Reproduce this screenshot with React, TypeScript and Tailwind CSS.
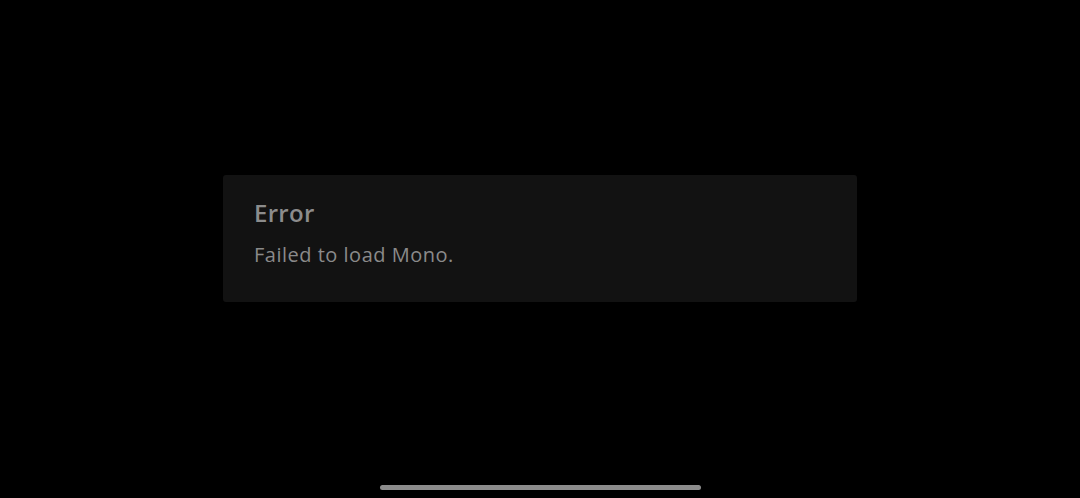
export default function App() {
  return (
    <div className="flex h-[498px] w-full flex-col bg-black" style={{ fontFamily: '"Open Sans", "Noto Sans", sans-serif' }}>
      <div className="mx-auto mt-[175px] h-[127px] w-[634px] rounded-[3px] bg-[#121212] px-[31px] pt-[22px]">
        <h1 className="text-[24px] font-semibold leading-[32px] tracking-[0.3px] text-[#8c8c8c]">Error</h1>
        <p className="mt-[12px] text-[20px] leading-[28px] tracking-[0.5px] text-[#8a8a8a]">Failed to load Mono.</p>
      </div>
      <div className="mx-auto mb-[8px] mt-auto h-[5px] w-[321px] rounded-full bg-[#8c8c8c]" />
    </div>
  );
}
